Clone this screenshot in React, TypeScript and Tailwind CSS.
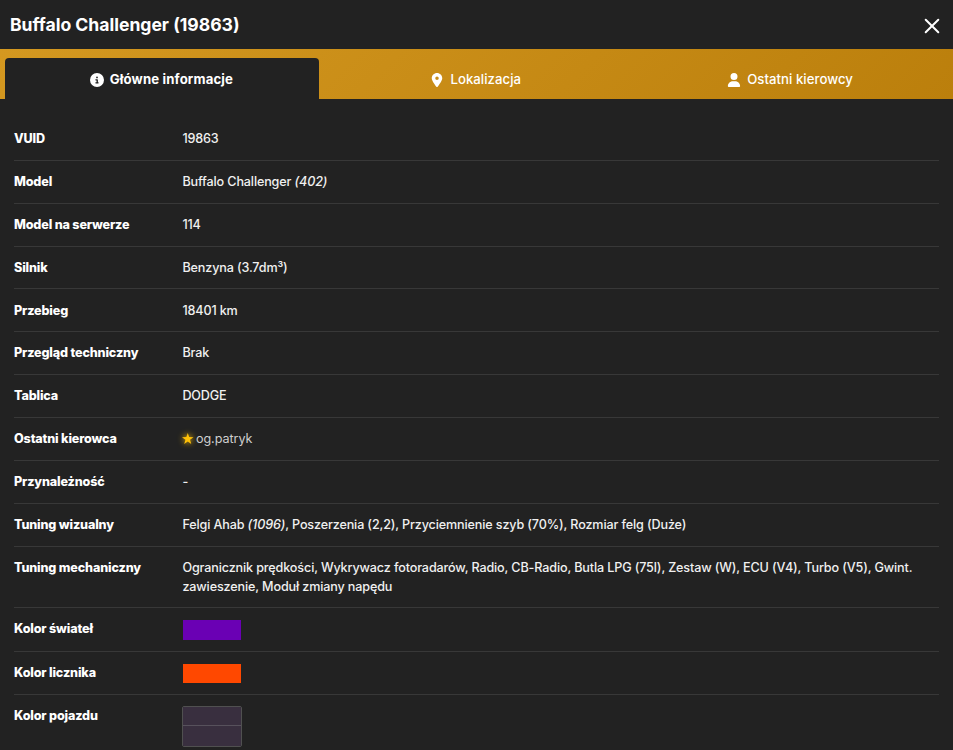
import { useState } from "react";
import type { ReactNode } from "react";
import { FaCircleInfo, FaLocationDot, FaUser } from "react-icons/fa6";

const tabs = [
  { id: "main", label: "Główne informacje", icon: FaCircleInfo },
  { id: "location", label: "Lokalizacja", icon: FaLocationDot },
  { id: "drivers", label: "Ostatni kierowcy", icon: FaUser },
];

const rows: { label: string; value: ReactNode; height: string }[] = [
  { label: "VUID", value: "19863", height: "h-[42.86px]" },
  { label: "Model", value: <>Buffalo Challenger <em>(402)</em></>, height: "h-[42.86px]" },
  { label: "Model na serwerze", value: "114", height: "h-[42.86px]" },
  { label: "Silnik", value: "Benzyna (3.7dm³)", height: "h-[42.86px]" },
  { label: "Przebieg", value: "18401 km", height: "h-[42.86px]" },
  { label: "Przegląd techniczny", value: "Brak", height: "h-[42.86px]" },
  { label: "Tablica", value: "DODGE", height: "h-[42.86px]" },
  {
    label: "Ostatni kierowca",
    value: (
      <span className="flex items-center gap-[2px] font-normal tracking-[-0.05px] text-[#cfcfcf]">
        <svg viewBox="0 0 24 24" className="-mt-px size-[11.5px] fill-[#ffc107] drop-shadow-[0_0_3px_#ffc107]">
          <path d="M12 0 15 8.6 24 8.8 16.8 14.3 19.4 23 12 17.8 4.6 23 7.2 14.3 0 8.8 9 8.6Z" />
        </svg>
        og.patryk
      </span>
    ),
    height: "h-[42.86px]",
  },
  { label: "Przynależność", value: "-", height: "h-[42.86px]" },
  {
    label: "Tuning wizualny",
    value: <>Felgi Ahab <em>(1096)</em>, Poszerzenia (2,2), Przyciemnienie szyb (70%), Rozmiar felg (Duże)</>,
    height: "h-[42.86px]",
  },
  {
    label: "Tuning mechaniczny",
    value:
      "Ogranicznik prędkości, Wykrywacz fotoradarów, Radio, CB-Radio, Butla LPG (75l), Zestaw (W), ECU (V4), Turbo (V5), Gwint. zawieszenie, Moduł zmiany napędu",
    height: "h-[61.6px]",
  },
  { label: "Kolor świateł", value: <div className="ml-[0.6px] h-[19.4px] w-[58px] bg-[#6a00b4]" />, height: "h-[43.4px]" },
  { label: "Kolor licznika", value: <div className="ml-[0.6px] h-[19.4px] w-[58px] bg-[#ff4800]" />, height: "h-[43.4px]" },
  {
    label: "Kolor pojazdu",
    value: (
      <div className="-mt-[1.4px] flex h-[41px] w-[60px] flex-col overflow-hidden rounded-[2px] border border-[#505050]">
        <div className="h-[19px] border-b border-[#57515c] bg-[#392f3f]" />
        <div className="flex-1 bg-[#392f3f]" />
      </div>
    ),
    height: "h-[66px]",
  },
];

export default function App() {
  const [active, setActive] = useState("main");

  return (
    <div className="h-screen overflow-hidden bg-[#222222] font-['Inter',sans-serif] text-white">
      <header className="flex h-[49px] items-center justify-between pl-[10px] pr-[13px]">
        <h1 className="text-[17.6px] font-bold leading-[49px] tracking-[-0.02px]">Buffalo Challenger (19863)</h1>
        <button aria-label="Zamknij" className="pt-[3px]">
          <svg viewBox="0 0 16 16" className="size-4" fill="none" stroke="currentColor" strokeWidth="2" strokeLinecap="round">
            <path d="M1.7 1.7 14.3 14.3M14.3 1.7 1.7 14.3" />
          </svg>
        </button>
      </header>

      <nav className="flex h-[50px] bg-[linear-gradient(135deg,#d49820,#bb7f0c)] px-[5px] pt-[9px]">
        {tabs.map((tab) => (
          <button
            key={tab.id}
            onClick={() => setActive(tab.id)}
            className={`flex flex-1 items-center justify-center gap-[6px] rounded-t-[4px] pr-[1.5px] pt-[2px] text-[13.2px] ${
              active === tab.id ? "bg-[#222222] font-bold tracking-[0.13px]" : "font-medium tracking-[0.03px]"
            }`}
          >
            <tab.icon className="size-[14px]" />
            {tab.label}
          </button>
        ))}
      </nav>

      <dl className="px-[14px] pt-[19px] text-[12.6px] leading-[18.8px]">
        {rows.map((row) => (
          <div key={row.label} className={`flex border-b border-[#383838] pt-[12.2px] ${row.height}`}>
            <dt className="w-[168.4px] shrink-0 font-extrabold tracking-[-0.16px]">{row.label}</dt>
            <dd className="flex-1 font-medium tracking-[-0.135px] text-[#f0f0f0]">{row.value}</dd>
          </div>
        ))}
      </dl>
    </div>
  );
}
